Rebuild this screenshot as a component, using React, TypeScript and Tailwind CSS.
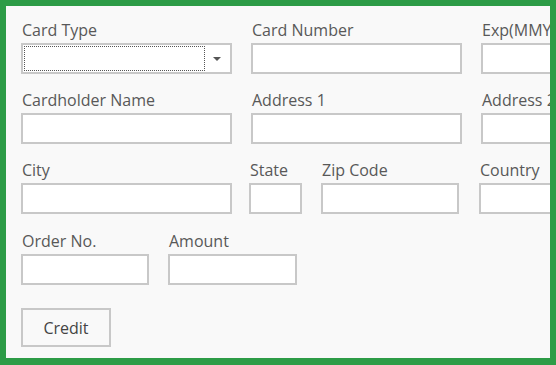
const font = { fontFamily: '"Open Sans", "Noto Sans", Arial, sans-serif' }

function Field({ label, width, children }: { label: string; width: string; children?: React.ReactNode }) {
  return (
    <div className={`flex shrink-0 flex-col ${width}`}>
      <label className="mb-[5px] h-[16px] whitespace-nowrap pl-px text-[16px] leading-[16px] text-[#585858]">{label}</label>
      {children ?? <input className="h-[31px] w-full border-2 border-[#c8c8c8] bg-white outline-none" />}
    </div>
  )
}

export default function App() {
  return (
    <div className="h-[365px] w-[556px] bg-[#2d9c47] pb-[7px] pl-[6px] pr-[6px] pt-[6px]" style={font}>
      <div className="flex h-full flex-col overflow-hidden bg-[#f9f9f9] pl-[15px] pt-[16px]">
        <div className="flex gap-[19px]">
          <Field label="Card Type" width="w-[211px]">
            <div className="relative flex h-[31px] w-full items-center border-2 border-[#c8c8c8] bg-white">
              <div className="ml-px h-[25px] w-[181px] border border-dotted border-[#555]" />
              <svg className="absolute right-[9px] top-[12px]" width="8" height="4" viewBox="0 0 8 4">
                <path d="M0 0h8L4 4z" fill="#555" />
              </svg>
            </div>
          </Field>
          <Field label="Card Number" width="w-[211px]" />
          <Field label="Exp(MMYY)" width="w-[120px]" />
        </div>
        <div className="mt-[18px] flex gap-[19px]">
          <Field label="Cardholder Name" width="w-[211px]" />
          <Field label="Address 1" width="w-[211px]" />
          <Field label="Address 2" width="w-[120px]" />
        </div>
        <div className="mt-[18px] flex">
          <Field label="City" width="w-[211px]" />
          <div className="ml-[17px]">
            <Field label="State" width="w-[53px]" />
          </div>
          <div className="ml-[19px]">
            <Field label="Zip Code" width="w-[138px]" />
          </div>
          <div className="ml-[20px]">
            <Field label="Country" width="w-[120px]" />
          </div>
        </div>
        <div className="mt-[19px] flex gap-[19px]">
          <Field label="Order No." width="w-[128px]" />
          <Field label="Amount" width="w-[129px]" />
        </div>
        <div className="mt-[23px]">
          <button className="h-[39px] w-[90px] border-2 border-[#c8c8c8] bg-[#f9f9f9] text-[16px] text-[#444]">Credit</button>
        </div>
      </div>
    </div>
  )
}
